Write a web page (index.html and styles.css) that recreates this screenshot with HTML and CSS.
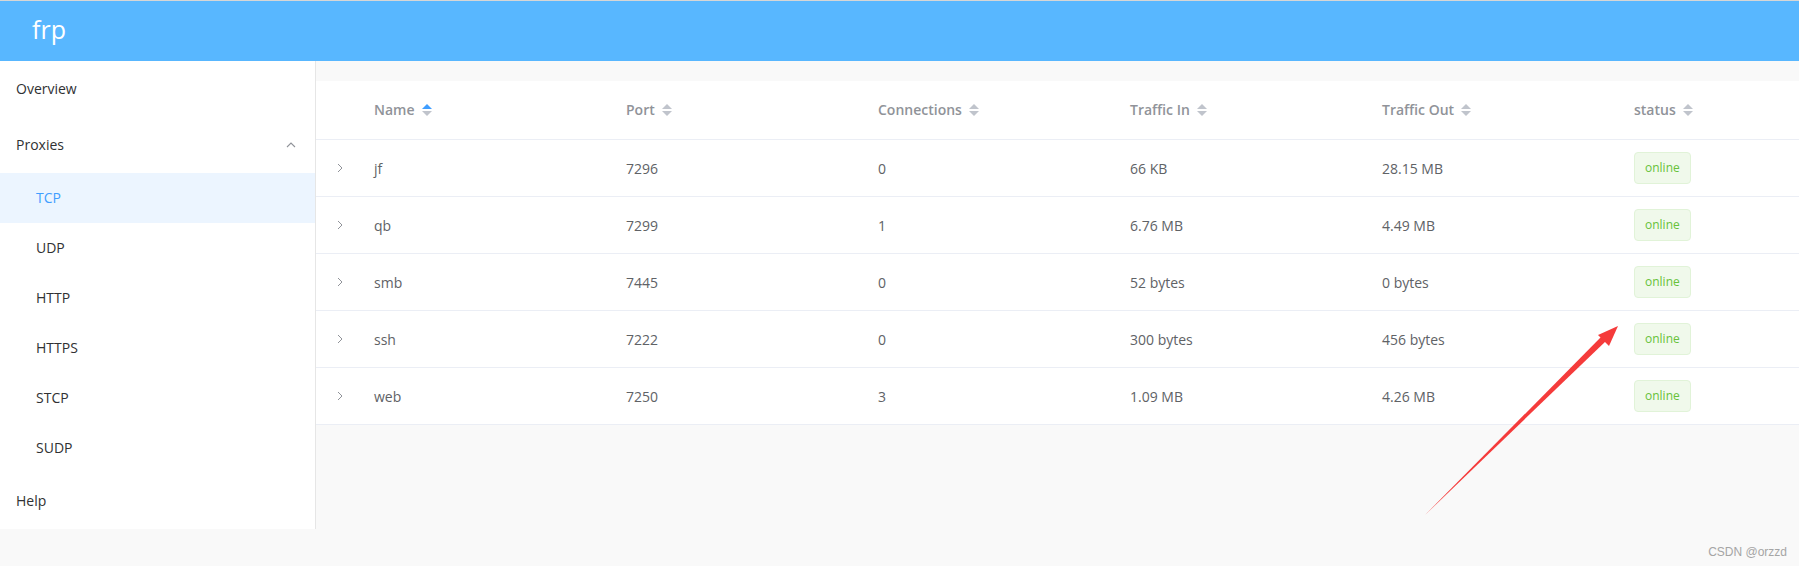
FILE: index.html
```html
<!DOCTYPE html>
<html lang="en">
<head>
  <meta charset="UTF-8" />
  <meta name="viewport" content="width=device-width, initial-scale=1.0"/>
  <title>frp dashboard</title>
  <link rel="stylesheet" href="styles.css">
</head>
<body>
  <div class="header">
    <span class="brand">frp</span>
  </div>

  <div class="layout">
    <div class="sidebar">
      <div class="menu-item">Overview</div>
      <div class="menu-item submenu-title">
        <span>Proxies</span>
        <svg class="arrow-up" width="12" height="12" viewBox="0 0 12 12">
          <polyline points="2,8 6,4 10,8" fill="none" stroke="#909399" stroke-width="1.1"/>
        </svg>
      </div>
      <div class="sub-item active">TCP</div>
      <div class="sub-item">UDP</div>
      <div class="sub-item">HTTP</div>
      <div class="sub-item">HTTPS</div>
      <div class="sub-item">STCP</div>
      <div class="sub-item">SUDP</div>
      <div class="menu-item">Help</div>
    </div>

    <div class="main">
      <div class="table">
        <div class="row head">
          <div class="cell"></div>
          <div class="cell">Name <span class="caret asc"><i class="up"></i><i class="down"></i></span></div>
          <div class="cell">Port <span class="caret"><i class="up"></i><i class="down"></i></span></div>
          <div class="cell">Connections <span class="caret"><i class="up"></i><i class="down"></i></span></div>
          <div class="cell">Traffic In <span class="caret"><i class="up"></i><i class="down"></i></span></div>
          <div class="cell">Traffic Out <span class="caret"><i class="up"></i><i class="down"></i></span></div>
          <div class="cell">status <span class="caret"><i class="up"></i><i class="down"></i></span></div>
        </div>

        <div class="row">
          <div class="cell expand"><svg width="8" height="10" viewBox="0 0 8 10"><polyline points="2,1 6,5 2,9" fill="none" stroke="#909399" stroke-width="1"/></svg></div>
          <div class="cell">jf</div>
          <div class="cell">7296</div>
          <div class="cell">0</div>
          <div class="cell">66 KB</div>
          <div class="cell">28.15 MB</div>
          <div class="cell"><span class="tag">online</span></div>
        </div>

        <div class="row">
          <div class="cell expand"><svg width="8" height="10" viewBox="0 0 8 10"><polyline points="2,1 6,5 2,9" fill="none" stroke="#909399" stroke-width="1"/></svg></div>
          <div class="cell">qb</div>
          <div class="cell">7299</div>
          <div class="cell">1</div>
          <div class="cell">6.76 MB</div>
          <div class="cell">4.49 MB</div>
          <div class="cell"><span class="tag">online</span></div>
        </div>

        <div class="row">
          <div class="cell expand"><svg width="8" height="10" viewBox="0 0 8 10"><polyline points="2,1 6,5 2,9" fill="none" stroke="#909399" stroke-width="1"/></svg></div>
          <div class="cell">smb</div>
          <div class="cell">7445</div>
          <div class="cell">0</div>
          <div class="cell">52 bytes</div>
          <div class="cell">0 bytes</div>
          <div class="cell"><span class="tag">online</span></div>
        </div>

        <div class="row">
          <div class="cell expand"><svg width="8" height="10" viewBox="0 0 8 10"><polyline points="2,1 6,5 2,9" fill="none" stroke="#909399" stroke-width="1"/></svg></div>
          <div class="cell">ssh</div>
          <div class="cell">7222</div>
          <div class="cell">0</div>
          <div class="cell">300 bytes</div>
          <div class="cell">456 bytes</div>
          <div class="cell"><span class="tag">online</span></div>
        </div>

        <div class="row">
          <div class="cell expand"><svg width="8" height="10" viewBox="0 0 8 10"><polyline points="2,1 6,5 2,9" fill="none" stroke="#909399" stroke-width="1"/></svg></div>
          <div class="cell">web</div>
          <div class="cell">7250</div>
          <div class="cell">3</div>
          <div class="cell">1.09 MB</div>
          <div class="cell">4.26 MB</div>
          <div class="cell"><span class="tag">online</span></div>
        </div>
      </div>
    </div>
  </div>

  <!-- annotation drawn over the screenshot -->
  <svg class="annotation" width="1799" height="566" viewBox="0 0 1799 566">
    <polygon points="1424,516 1602,336 1606,341" fill="#f53b3b"/>
    <polygon points="1618,326 1598,335 1609,346" fill="#f53b3b"/>
  </svg>

  <div class="watermark">CSDN @orzzd</div>
</body>
</html>
```

FILE: styles.css
```css
:root {
  --primary: #409eff;
  --header-bg: #58b7ff;
  --text: #303133;
  --text-regular: #606266;
  --text-muted: #909399;
  --border: #ebeef5;
  --page-bg: #f9f9f9;
}

* {
  box-sizing: border-box;
}

body {
  margin: 0;
  font-family: 'Open Sans', sans-serif;
  font-size: 14px;
  background-color: var(--page-bg);
  color: var(--text);
  height: 566px;
  overflow: hidden;
}

.header {
  height: 61px;
  background-color: var(--header-bg);
  border-top: 1px solid #d6d6d6;
  display: flex;
  align-items: center;
  padding-left: 32px;
}

.brand {
  color: #fff;
  font-size: 25px;
  line-height: 1;
  margin-top: -4px;
}

.layout {
  display: flex;
  align-items: flex-start;
}

.sidebar {
  width: 316px;
  flex-shrink: 0;
  background-color: #fff;
  border-right: 1px solid #e6e6e6;
}

.menu-item {
  height: 56px;
  line-height: 56px;
  padding-left: 16px;
  color: var(--text);
}

.submenu-title {
  display: flex;
  align-items: center;
  justify-content: space-between;
  padding-right: 18px;
}

.sub-item {
  height: 50px;
  line-height: 50px;
  padding-left: 36px;
  color: var(--text);
}

.sub-item.active {
  background-color: #ecf5ff;
  color: var(--primary);
}

.main {
  flex: 1;
  padding-top: 20px;
}

.table {
  background-color: #fff;
}

.row {
  display: grid;
  grid-template-columns: 48px repeat(5, 252px) 1fr;
  height: 57px;
  border-bottom: 1px solid var(--border);
  color: var(--text-regular);
}

.row.head {
  height: 59px;
  padding-bottom: 1px;
  color: var(--text-muted);
  font-weight: 600;
}

.cell {
  display: flex;
  align-items: center;
  padding-left: 10px;
}

.cell.expand {
  justify-content: center;
  padding-left: 0;
}

.caret {
  display: inline-flex;
  flex-direction: column;
  gap: 2px;
  margin-left: 7px;
}

.caret i {
  width: 0;
  height: 0;
  border-left: 5px solid transparent;
  border-right: 5px solid transparent;
}

.caret .up {
  border-bottom: 5px solid #c0c4cc;
}

.caret .down {
  border-top: 5px solid #c0c4cc;
}

.caret.asc .up {
  border-bottom-color: var(--primary);
}

.tag {
  display: inline-block;
  height: 32px;
  line-height: 30px;
  padding: 0 10px;
  font-size: 12px;
  font-weight: 400;
  color: #67c23a;
  background-color: #f0f9eb;
  border: 1px solid #e1f3d8;
  border-radius: 4px;
}

.annotation {
  position: absolute;
  left: 0;
  top: 0;
  pointer-events: none;
}

.watermark {
  position: absolute;
  right: 12px;
  bottom: 7px;
  font-family: 'Liberation Sans', sans-serif;
  font-size: 12px;
  color: #a5a5a5;
}
```
